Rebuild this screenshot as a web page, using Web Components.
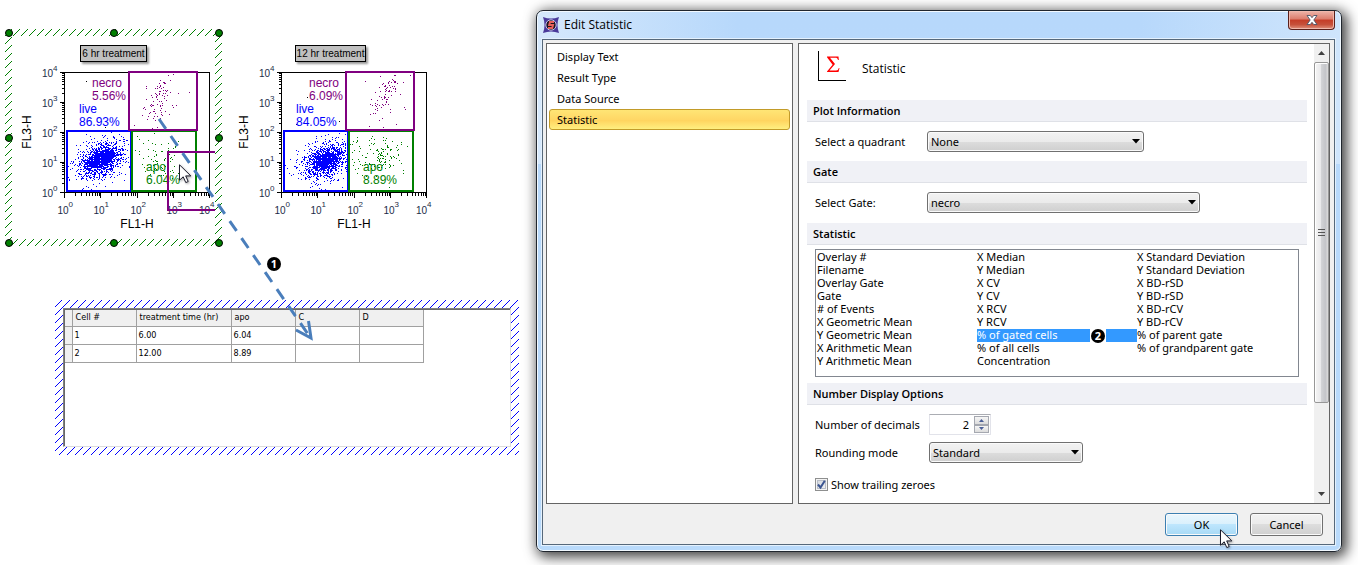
<!DOCTYPE html>
<html lang="en">
<head>
<meta charset="utf-8">
<title>Edit Statistic</title>
<style>
  html { background: #fff; }
  body { margin: 0; font: 11px/13px "Noto Sans", "Open Sans", sans-serif; color: #000; }
</style>
</head>
<body>
<report-app></report-app>

<script>
const define = (name, html, setup) => {
  const tpl = document.createElement('template');
  tpl.innerHTML = html;
  customElements.define(name, class extends HTMLElement {
    constructor() {
      super();
      this.attachShadow({ mode: 'open' });
    }
    connectedCallback() {
      if (this.shadowRoot.childNodes.length) return;
      this.shadowRoot.append(tpl.content.cloneNode(true));
      if (setup) setup(this, this.shadowRoot);
    }
  });
};

/* Hatched selection frame, optionally with round resize handles. */
define('hatch-frame', `
<style>
  :host { display: block; position: relative; padding: var(--band, 7px); box-sizing: border-box; }
  svg.hatch { position: absolute; inset: 0; width: 100%; height: 100%; overflow: hidden; }
  .hatch path { fill: none; stroke-width: 1; }
  :host([plain]) svg.hatch { display: none; }
  .inner { position: relative; background: #fff; height: 100%; overflow: hidden; }
  .handles { display: none; position: absolute; inset: 0; width: 100%; height: 100%; overflow: visible; }
  :host([handles]) .handles { display: block; }
  circle { fill: #008000; stroke: #000; stroke-width: 1; }
</style>
<svg class="hatch" aria-hidden="true"><path/></svg>
<div class="inner"><slot></slot></div>
<svg class="handles" viewBox="0 0 217 217" aria-hidden="true">
  <circle cx="4" cy="4" r="3.5"/><circle cx="109" cy="4" r="3.5"/><circle cx="214" cy="4" r="3.5"/>
  <circle cx="4" cy="109" r="3.5"/><circle cx="214" cy="109" r="3.5"/>
  <circle cx="4" cy="214" r="3.5"/><circle cx="109" cy="214" r="3.5"/><circle cx="214" cy="214" r="3.5"/>
</svg>`, (h, r) => {
  const path = r.querySelector('.hatch path');
  path.setAttribute('stroke', h.getAttribute('color') === 'blue' ? '#0000ff' : '#008000');
  const draw = () => {
    const { offsetWidth: w, offsetHeight: t } = h;
    let d = '';
    for (let s = 7; s < w + t; s += 8) d += `M${s} 0L${s - t} ${t}`;
    path.setAttribute('d', d);
  };
  new ResizeObserver(draw).observe(h);
  draw();
});

/* Log-log dot plot with three gates. */
define('scatter-plot', `
<style>
  :host { display: block; }
  figure { margin: 0; padding-top: 9px; display: flex; flex-direction: column; align-items: center; }
  figcaption { box-sizing: border-box; height: 17px; border: 1px solid #000; background: #c0c0c0; padding: 0 1px;
    font: 10px/15px "Liberation Sans", Arial, sans-serif; white-space: nowrap; box-shadow: 2px 2px 2px #999; }
  svg { display: block; width: 100%; }
  text { font-family: "Liberation Sans", Arial, sans-serif; font-size: 12px; }
  .tick { font-size: 10px; fill: #1c2c48; }
  .sup { font-size: 8px; fill: #1c2c48; }
  .axis { fill: none; stroke: #000; stroke-width: 1; shape-rendering: crispEdges; }
  .gate { fill: none; stroke-width: 2; shape-rendering: crispEdges; }
  .dots { shape-rendering: crispEdges; }
</style>
<figure>
  <figcaption><slot></slot></figcaption>
  <svg viewBox="12 62 203 177" role="img">
    <g id="plot"></g>
  </svg>
</figure>`, (host, root) => {
  let seed = +host.getAttribute('seed');
  const rnd = () => (seed = (seed * 1664525 + 1013904223) % 4294967296) / 4294967296;
  const gauss = () => Math.sqrt(-2 * Math.log(rnd() + 1e-9)) * Math.cos(6.2832 * rnd());
  const cloud = (n, cx, cy, sx, sy, tilt, x0, y0, x1, y1) => {
    let d = '';
    for (let i = 0; i < n; i++) {
      const a = gauss(), b = gauss();
      const x = Math.round(cx + a * sx), y = Math.round(cy + b * sy - a * tilt);
      if (x > x0 && x < x1 && y > y0 && y < y1) d += `M${x} ${y}h1v1h-1z`;
    }
    return d;
  };
  const [lx, ly] = host.getAttribute('live-at').split(' ').map(Number);
  const [nx, ny] = host.getAttribute('necro-at').split(' ').map(Number);
  const [ax, ay] = host.getAttribute('apo-at').split(' ').map(Number);
  const apoN = +host.getAttribute('apo-n');
  const live = cloud(750, lx, ly, 7, 5, 2, 67, 131, 130, 190) + cloud(900, lx, ly, 13, 10, 3, 67, 131, 130, 190);
  const necro = cloud(50, nx, ny, 5, 8, 5, 130, 73, 196, 129) + cloud(22, nx - 8, ny + 20, 7, 8, 2, 130, 73, 196, 129)
    + cloud(22, nx - 4, ny + 8, 16, 14, 3, 130, 73, 196, 129);
  const apo = cloud(apoN, ax, ay, 8, 9, 3, 132, 132, 196, 190) + cloud(apoN, 146, 154, 15, 12, 0, 132, 132, 196, 190);
  const stray = cloud(10, 105, 115, 26, 20, 0, 66, 74, 128, 129);
  let axis = 'M64.5 72.5H209.5V192.5H64.5z', ticks = '';
  for (let k = 0; k < 5; k++) {
    const x = 64.5 + Math.round(k * 36.25), y = 192.5 - k * 30;
    /* the last label stays inside the plot's right edge */
    const tx = Math.min(x - 7, 199);
    axis += `M${x} 192.5v5M64.5 ${y}h-5`;
    ticks += `<text class="tick" x="${tx}" y="214">10</text><text class="sup" x="${tx + 11}" y="207">${k}</text>`
      + `<text class="tick" x="42" y="${y + 4}">10</text><text class="sup" x="53" y="${y - 2}">${k}</text>`;
    if (k < 4) for (let m = 2; m < 10; m++) {
      const f = Math.log10(m);
      axis += `M${Math.round(x - .5 + f * 36.25) + .5} 192.5v3M64.5 ${Math.round(y - .5 - f * 30) + .5}h-3`;
    }
  }
  root.getElementById('plot').innerHTML = `
    <path class="axis" d="${axis}"/>${ticks}
    <text x="137" y="228" text-anchor="middle">FL1-H</text>
    <text transform="translate(31 132) rotate(-90)" text-anchor="middle">FL3-H</text>
    <path class="dots" fill="#000" d="${stray}"/>
    <path class="dots" fill="#00f" d="${live}"/>
    <path class="dots" fill="#800080" d="${necro}"/>
    <path class="dots" fill="#008000" d="${apo}"/>
    <rect class="gate" x="67" y="131" width="64" height="60" stroke="#00f"/>
    <rect class="gate" x="132" y="131" width="64" height="60" stroke="#008000"/>
    <rect class="gate" x="129" y="72" width="68" height="58" stroke="#800080"/>
    <g fill="#800080"><text x="92" y="87">necro</text><text x="92" y="100">${host.getAttribute('necro')}</text></g>
    <g fill="#00f"><text x="79" y="113">live</text><text x="79" y="126">${host.getAttribute('live')}</text></g>
    <g fill="#008000"><text x="146" y="171">apo</text><text x="146" y="184">${host.getAttribute('apo')}</text></g>`;
});

define('data-grid', `
<style>
  :host { display: block; box-sizing: border-box; height: 139px; border: 1px solid; border-color: #808080 #dcdcdc #dcdcdc #808080;
    box-shadow: inset 1px 1px #696969; padding: 1px; }
  table { border-collapse: collapse; table-layout: fixed; width: 358px; font: 9px/13px "DejaVu Sans Condensed", "DejaVu Sans", sans-serif; }
  th, td { box-sizing: border-box; text-align: left; font-weight: normal; padding: 0 0 0 2px; height: 18px; border: 1px solid #a0a0a0; }
  th { background: #f0f0f0; height: 16px; padding-left: 3px; border-top: 0; }
  th:first-child, td:first-child { border-left: 0; background: #f0f0f0; }
</style>
<table>
  <colgroup><col style="width:7px"><col style="width:64px"><col style="width:95px"><col style="width:64px"><col style="width:64px"><col style="width:64px"></colgroup>
  <thead><tr><th></th><th scope="col">Cell #</th><th scope="col">treatment time (hr)</th><th scope="col">apo</th><th scope="col">C</th><th scope="col">D</th></tr></thead>
  <tbody>
    <tr><td></td><td>1</td><td>6.00</td><td>6.04</td><td></td><td></td></tr>
    <tr><td></td><td>2</td><td>12.00</td><td>8.89</td><td></td><td></td></tr>
  </tbody>
</table>`);

define('step-badge', `
<style>
  :host { display: block; width: 14px; height: 14px; border-radius: 7px; background: #000; color: #fff;
    font: bold 11px/14px "Noto Sans", sans-serif; text-align: center; }
</style><slot></slot>`);

define('mouse-pointer', `
<style>
  :host { display: block; width: 13px; height: 20px; pointer-events: none; }
  svg { display: block; filter: drop-shadow(1px 1px 1px #0005); }
</style>
<svg width="13" height="20" viewBox="0 0 13 20" aria-hidden="true"><path d="M.5 .8V16.2L4.2 12.8L6.8 18.6L9.2 17.5L6.7 11.9H11.8z" fill="#fff" stroke="#1b1b2b"/></svg>`);

define('report-canvas', `
<style>
  :host { display: block; position: relative; padding: 29px 17px 0 5px; }
  .plots { display: flex; }
  .plots hatch-frame { width: 217px; height: 217px; flex: none; }
  .sheet { --band: 8px; margin: 54px 0 0 50px; }
  .over { position: absolute; left: 0; top: 0; pointer-events: none; }
  step-badge { position: absolute; left: 267px; top: 257px; }
  mouse-pointer { position: absolute; left: 179px; top: 164px; }
</style>
<div class="plots">
  <hatch-frame handles><scatter-plot seed="11" live-at="101 159" necro-at="161 92" apo-at="166 160" apo-n="45" necro="5.56%" live="86.93%" apo="6.04%">6 hr treatment</scatter-plot></hatch-frame>
  <hatch-frame plain><scatter-plot seed="29" live-at="108 160" necro-at="171 90" apo-at="169 157" apo-n="75" necro="6.09%" live="84.05%" apo="8.89%">12 hr treatment</scatter-plot></hatch-frame>
</div>
<hatch-frame class="sheet" color="blue"><data-grid></data-grid></hatch-frame>
<svg class="over" width="330" height="345" viewBox="0 0 330 345" aria-hidden="true">
  <path d="M215 152H168V210H215" fill="none" stroke="#800080" stroke-width="2" shape-rendering="crispEdges"/>
  <path d="M159 119L310 337" fill="none" stroke="#4a7ebb" stroke-width="3" stroke-dasharray="12 8.7"/>
  <path d="M296 330L311 338L308.500 321" fill="none" stroke="#4a7ebb" stroke-width="3"/>
</svg>
<step-badge>1</step-badge>
<mouse-pointer></mouse-pointer>`);

define('nav-list', `
<style>
  :host { display: block; box-sizing: border-box; border: 1px solid #646464; background: #fff; padding: 2px; }
  nav { display: flex; flex-direction: column; }
  a { box-sizing: border-box; height: 21px; line-height: 19px; padding: 0 7px; border: 1px solid transparent; border-radius: 3px;
    color: #000; text-decoration: none; }
  a[aria-current] { border-color: #c29b29; background: linear-gradient(#ffe575, #ffd766 50%, #ffd45f 55%, #ffef80); }
</style>
<nav aria-label="Pages"><a href="#text">Display Text</a><a href="#type">Result Type</a><a href="#source">Data Source</a><a href="#statistic" aria-current="page">Statistic</a></nav>`);

define('group-section', `
<style>
  :host { display: block; }
  h2 { margin: 0; box-sizing: border-box; height: 22px; padding: 0 6px; background: #f0f1f6; border-bottom: 1px solid #dfe1e7; font: 600 11px/21px "Open Sans", sans-serif; }
  .body { padding: var(--pad, 9px 8px); }
</style>
<h2></h2><div class="body"><slot></slot></div>`, (h, r) => r.querySelector('h2').textContent = h.getAttribute('heading'));

define('select-field', `
<style>
  :host { display: flex; align-items: center; }
  label { width: var(--label, 112px); }
  .box { position: relative; width: var(--width); }
  select { appearance: none; display: block; box-sizing: border-box; width: 100%; height: 21px; margin: 0; padding: 0 20px 0 3px;
    font: inherit; color: #000; border: 1px solid #707070; border-radius: 3px; box-shadow: inset 0 0 0 1px #fafafa;
    background: linear-gradient(#f2f2f2, #ebebeb 50%, #dddddd 50%, #cfcfcf); }
  svg { position: absolute; right: 4px; top: 8px; pointer-events: none; }
</style>
<label for="s"></label>
<span class="box"><select id="s"><option></option></select><svg width="8" height="5" viewBox="0 0 8 5"><path d="M0 0h8L4 4.500z"/></svg></span>`, (h, r) => {
  r.querySelector('label').textContent = h.getAttribute('label');
  r.querySelector('option').textContent = h.getAttribute('value');
});

define('number-field', `
<style>
  :host { display: flex; align-items: center; }
  label { width: var(--label); }
  .box { box-sizing: border-box; display: flex; width: 62px; height: 21px; border: 1px solid #e2e3ea; border-top-color: #abadb3; border-radius: 1px; padding: 1px; }
  input { appearance: textfield; flex: 1; min-width: 0; border: 0; margin: 0; padding: 0 5px 0 0; font: inherit; text-align: right; outline: 0; }
  input::-webkit-inner-spin-button { appearance: none; display: none; }
  .spin { display: flex; flex-direction: column; width: 15px; }
  button { flex: 1; min-height: 0; padding: 0; border: 1px solid #a5a8b0; background: linear-gradient(#f6f6f6, #dcdcdc); display: flex; align-items: center; justify-content: center; }
</style>
<label for="n">Number of decimals</label>
<span class="box"><input id="n" type="number" value="2"><span class="spin">
<button aria-label="Increase"><svg width="5" height="3" viewBox="0 0 5 3"><path d="M0 3L2.500 0L5 3z" fill="#4a5f97"/></svg></button>
<button aria-label="Decrease"><svg width="5" height="3" viewBox="0 0 5 3"><path d="M0 0L2.500 3L5 0z" fill="#4a5f97"/></svg></button></span></span>`);

define('check-field', `
<style>
  :host { display: block; }
  label { display: flex; align-items: center; gap: 3px; }
  .box { position: relative; width: 13px; height: 13px; }
  input { appearance: none; display: block; box-sizing: border-box; width: 13px; height: 13px; margin: 0; border: 1px solid #8e8f8f;
    background: linear-gradient(135deg, #cfd4dc, #f6f6f6); box-shadow: inset 0 0 0 1px #f4f4f4, inset 0 0 0 2px #b9bec8; }
  svg { position: absolute; left: 0; top: 0; pointer-events: none; }
  input:not(:checked) + svg { display: none; }
</style>
<label><span class="box"><input type="checkbox" checked><svg width="13" height="13" viewBox="0 0 13 13"><path d="M3 6.500L5.500 9.500L9.800 2.800" fill="none" stroke="#3b5591" stroke-width="2"/></svg></span><slot></slot></label>`);

define('statistic-list', `
<style>
  :host { display: block; }
  .list { box-sizing: border-box; height: 128px; border: 1px solid #828790; padding: 1px; display: grid; grid-auto-flow: column;
    grid-template-rows: repeat(9, 13px); grid-template-columns: 160px 160px 1fr; }
  label { position: relative; display: block; line-height: 11px; white-space: nowrap; }
  input { appearance: none; position: absolute; margin: 0; width: 0; height: 0; }
  label:has(:checked) { background: #3399ff; color: #fff; }
  .mark { position: absolute; left: 113px; top: 0; box-sizing: border-box; width: 16px; height: 13px; padding-left: 1px; background: #fff; }
</style>
<div class="list" role="radiogroup" aria-label="Statistic"></div>`, (h, r) => {
  const cols = [
    ['Overlay #', 'Filename', 'Overlay Gate', 'Gate', '# of Events', 'X Geometric Mean', 'Y Geometric Mean', 'X Arithmetic Mean', 'Y Arithmetic Mean'],
    ['X Median', 'Y Median', 'X CV', 'Y CV', 'X RCV', 'Y RCV', '% of gated cells', '% of all cells', 'Concentration'],
    ['X Standard Deviation', 'Y Standard Deviation', 'X BD-rSD', 'Y BD-rSD', 'X BD-rCV', 'Y BD-rCV', '% of parent gate', '% of grandparent gate']
  ];
  r.querySelector('.list').innerHTML = cols.flat().map(t => {
    const on = t === '% of gated cells';
    return `<label><input type="radio" name="stat"${on ? ' checked' : ''}>${t}${on ? '<span class="mark"><step-badge>2</step-badge></span>' : ''}</label>`;
  }).join('');
});

define('scroll-rail', `
<style>
  :host { display: flex; flex-direction: column; width: 15px; background: #f0f0f0; }
  button { height: 18px; border: 0; padding: 0; background: none; display: flex; align-items: center; justify-content: center; }
  .track { flex: 1; display: flex; flex-direction: column; }
  .thumb { flex: 342 0 0; box-sizing: border-box; border: 1px solid #979797; border-radius: 2px; box-shadow: inset 1px 1px #fff;
    background: linear-gradient(90deg, #f5f5f5, #e9e9eb 45%, #d2d3d6 50%, #c4c5c9 80%, #dcdcdc); display: flex; align-items: center; justify-content: center; }
  .rest { flex: 83 0 0; }
</style>
<button aria-label="Scroll up"><svg width="7" height="4" viewBox="0 0 7 4"><path d="M0 4L3.500 0L7 4z" fill="#404040"/></svg></button>
<div class="track"><div class="thumb"><svg width="8" height="9" viewBox="0 0 8 9"><path d="M0 1.500h7M0 4.500h7M0 7.500h7" stroke="#555"/></svg></div><div class="rest"></div></div>
<button aria-label="Scroll down"><svg width="7" height="4" viewBox="0 0 7 4"><path d="M0 0L3.500 4L7 0z" fill="#404040"/></svg></button>`);

define('statistic-page', `
<style>
  :host { display: flex; box-sizing: border-box; border: 1px solid #646464; background: #fff; }
  main { flex: 1; min-width: 0; padding: 7px 7px 0 8px; }
  header { display: flex; gap: 16px; padding-left: 11px; height: 49px; }
  .sigma { box-sizing: border-box; width: 28px; height: 30px; border: solid #000; border-width: 0 0 1px 1px; }
  .sigma svg { display: block; }
  h1 { margin: 0; font: 12px/36px "Open Sans", sans-serif; }
  .gate { --pad: 9px 8px 10px; }
  .list { --pad: 4px 8px 6px; }
  .numbers { --label: 114px; --width: 154px; }
  .stack { display: flex; flex-direction: column; gap: 7px; }
  .last { padding-top: 8px; }
</style>
<main>
  <header><span class="sigma"><svg width="27" height="29" viewBox="0 0 27 29" aria-hidden="true"><path d="M8 5.500H19.500L19.800 9H19C18.600 7.200 18 6.700 16 6.700H11L16 13L10.500 19.500H17C18.800 19.500 19.200 18.700 19.800 17H20.500L19.500 21H8V20.500L13.600 13.700L8 6.200z" fill="#f00"/></svg></span><h1>Statistic</h1></header>
  <group-section heading="Plot Information"><select-field label="Select a quadrant" value="None" style="--width:217px"></select-field></group-section>
  <group-section class="gate" heading="Gate"><select-field label="Select Gate:" value="necro" style="--width:273px"></select-field></group-section>
  <group-section class="list" heading="Statistic"><statistic-list></statistic-list></group-section>
  <group-section class="numbers" heading="Number Display Options"><div class="stack">
    <number-field></number-field><select-field label="Rounding mode" value="Standard"></select-field>
    <check-field class="last">Show trailing zeroes</check-field></div></group-section>
</main>
<scroll-rail></scroll-rail>`);

define('push-button', `
<style>
  :host { display: block; }
  button { box-sizing: border-box; width: 73px; height: 23px; padding: 0; font: inherit; color: #000; border: 1px solid #707070; border-radius: 3px;
    box-shadow: inset 0 0 0 1px #fafafa; background: linear-gradient(#f2f2f2, #ebebeb 50%, #dddddd 50%, #cfcfcf); }
  :host([primary]) button { border-color: #3c7fb1; background: linear-gradient(#eaf6fd, #d9f0fc 50%, #bee6fd 50%, #a7d9f5); }
</style><button><slot></slot></button>`);

define('edit-dialog', `
<style>
  :host { display: flex; flex-direction: column; box-sizing: border-box; border: 1px solid #20262e; border-radius: 7px; padding: 0 6px 6px 5px;
    box-shadow: inset 0 0 0 1px #f2f9ff, 3px 3px 13px 2px rgba(0,0,0,.75);
    background: linear-gradient(90deg, #d5e8fc, transparent 25%, transparent 75%, #cfe5fc) 0 0 / 100% 153px no-repeat, linear-gradient(#b7d8fb, #b9dafb); }
  .title { display: flex; align-items: flex-start; height: 28px; padding: 0 0 0 1px; }
  .title svg.app { margin-top: 6px; }
  .title span { flex: 1; padding-left: 5px; font: 12px/28px "Open Sans", sans-serif; }
  .close { width: 47px; height: 19px; padding: 0; border: 1px solid #5a1f1a; border-top: 0; border-radius: 0 0 4px 4px; display: flex; align-items: center; justify-content: center;
    background: linear-gradient(#eeb5aa, #dc7c6c 45%, #c53c27 50%, #c6503a 75%, #e0907c); box-shadow: inset 0 0 0 1px #f0b8ac; }
  .client { flex: 1; display: flex; flex-direction: column; border: 1px solid #56687a; background: #f0f0f0; padding: 3px 4px 0 3px; box-shadow: 0 0 0 1px #e4f1fd; }
  .panes { flex: 1; display: grid; grid-template-columns: 247px minmax(0, 1fr); gap: 5px; }
  footer { display: flex; justify-content: flex-end; gap: 12px; padding: 9px 7px 8px; }
  .ok { position: relative; }
  mouse-pointer { position: absolute; left: 55px; top: 16px; }
</style>
<div class="title">
  <svg class="app" width="16" height="16" viewBox="0 0 16 16" aria-hidden="true"><path d="M0 0Q8 3 16 0Q13 8 16 16Q8 13 0 16Q3 8 0 0z" fill="#4a3a9a"/><circle cx="8" cy="8" r="5.200" fill="#1c1420" stroke="#c9c4ee"/><path d="M11 5H7L6.200 8H10L9.200 11H5" fill="none" stroke="#e8605a" stroke-width="2"/></svg>
  <span>Edit Statistic</span>
  <button class="close" aria-label="Close"><svg width="12" height="10" viewBox="0 0 12 10"><path d="M1 .5H4.300L6 2.700L7.700 .5H11L7.800 5L11 9.500H7.700L6 7.300L4.300 9.500H1L4.200 5z" fill="#fff" stroke="#4c5568" stroke-width=".9"/></svg></button>
</div>
<div class="client">
  <div class="panes"><nav-list></nav-list><statistic-page></statistic-page></div>
  <footer><div class="ok"><push-button primary>OK</push-button><mouse-pointer></mouse-pointer></div><push-button>Cancel</push-button></footer>
</div>`);

define('report-app', `
<style>
  :host { display: grid; grid-template-columns: 536px minmax(0, 1fr); box-sizing: border-box; min-height: 100vh; overflow: hidden; }
  edit-dialog { margin: 10px 16px 13px 0; }
</style>
<report-canvas></report-canvas><edit-dialog role="dialog" aria-label="Edit Statistic"></edit-dialog>`);
</script>
</body>
</html>
